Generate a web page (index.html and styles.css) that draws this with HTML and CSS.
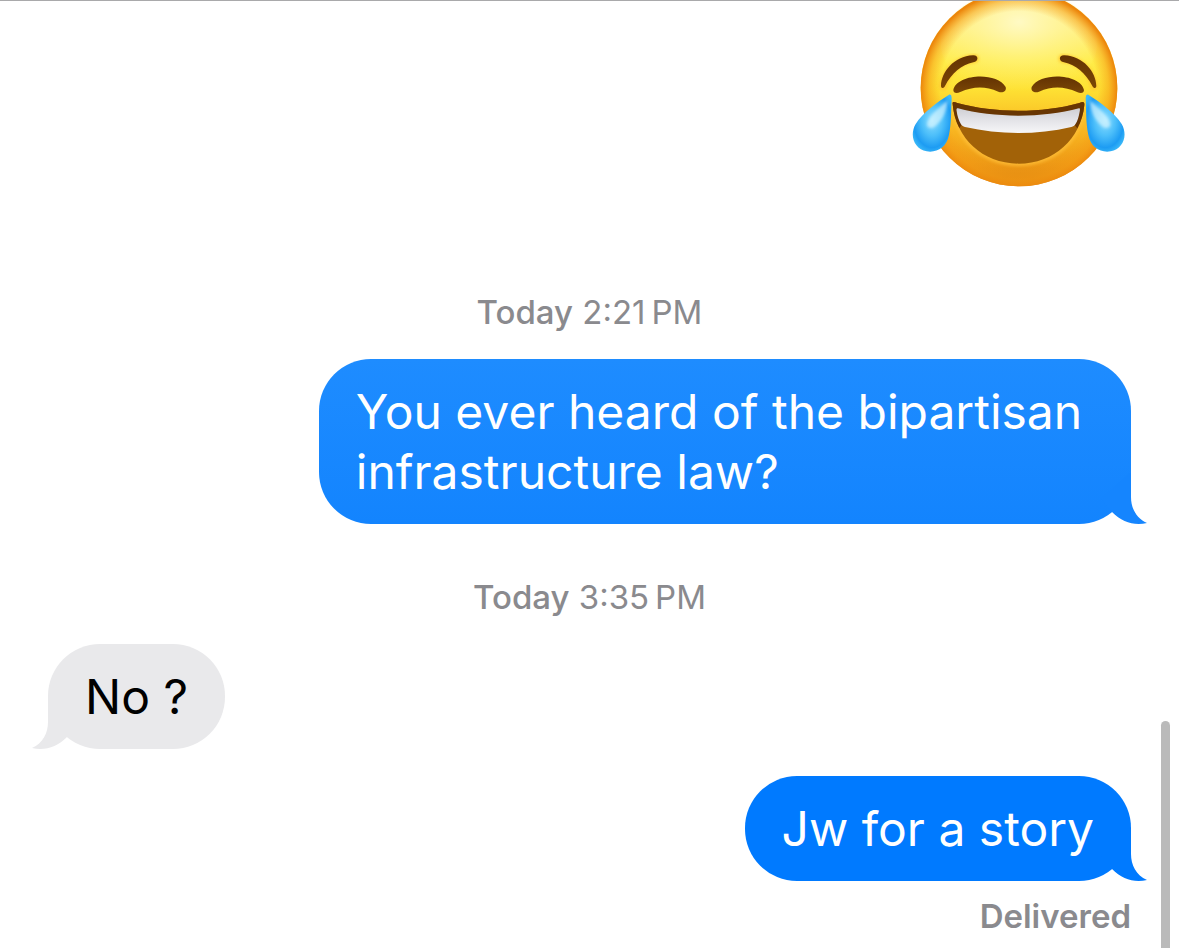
FILE: index.html
```html
<!DOCTYPE html>
<html lang="en">
<head>
<meta charset="utf-8">
<meta name="viewport" content="width=device-width, initial-scale=1">
<title>Messages</title>
<link rel="stylesheet" href="styles.css">
</head>
<body>
<main class="chat">
  <div class="row row-sent row-emoji">
    <svg class="emoji" viewBox="30 3 648 582" role="img" aria-label="Face with tears of joy">
      <defs>
        <linearGradient id="skin" x1="0" y1="0" x2="0" y2="1">
          <stop offset="0" stop-color="#fff08a"/>
          <stop offset=".2" stop-color="#fff07a"/>
          <stop offset=".36" stop-color="#ffed4a"/>
          <stop offset=".5" stop-color="#fee234"/>
          <stop offset=".7" stop-color="#f9b822"/>
          <stop offset=".88" stop-color="#ee9a16"/>
          <stop offset="1" stop-color="#dd8410"/>
        </linearGradient>
        <radialGradient id="rim" cx=".5" cy=".51" r=".5">
          <stop offset=".8" stop-color="#f59a13" stop-opacity="0"/>
          <stop offset=".91" stop-color="#f59a13" stop-opacity=".5"/>
          <stop offset="1" stop-color="#ec860c"/>
        </radialGradient>
        <radialGradient id="shine" cx=".5" cy=".3" r=".65">
          <stop offset="0" stop-color="#fffcd6" stop-opacity=".8"/>
          <stop offset=".5" stop-color="#fff8b0" stop-opacity=".4"/>
          <stop offset="1" stop-color="#fff3a0" stop-opacity="0"/>
        </radialGradient>
        <linearGradient id="brow" x1="0" y1="0" x2="0" y2="1">
          <stop offset="0" stop-color="#633203"/>
          <stop offset="1" stop-color="#7b4705"/>
        </linearGradient>
        <linearGradient id="teeth" x1="0" y1="0" x2="0" y2="1">
          <stop offset="0" stop-color="#cfcfd4"/>
          <stop offset=".5" stop-color="#e4e4e8"/>
          <stop offset="1" stop-color="#f6f6f8"/>
        </linearGradient>
        <radialGradient id="drop" cx=".5" cy=".45" r=".6">
          <stop offset="0" stop-color="#8adcff"/>
          <stop offset=".45" stop-color="#4dbffa"/>
          <stop offset=".8" stop-color="#1d9cf3"/>
          <stop offset="1" stop-color="#3cbaf8"/>
        </radialGradient>
        <filter id="soft" x="-20%" y="-20%" width="140%" height="140%"><feGaussianBlur stdDeviation="5"/></filter>
        <g id="features">
          <path d="M129 259C137 218 174 179 224 176" fill="none" stroke="#ffcd32" stroke-width="26" stroke-linecap="round" filter="url(#soft)"/>
          <path d="M123 258C124 216 162 169 219 166C237 165 236 185 220 187C184 194 155 220 135 258C130 267 123 265 123 258Z" fill="url(#brow)"/>
          <path d="M160 270C169 222 290 214 317 261C321 275 306 280 295 275C254 257 218 260 181 276C169 281 160 279 160 270Z" fill="url(#brow)"/>
          <path d="M147 284C153 283 155 288 155 296C153 330 155 365 147 405C140 443 110 459 80 454C43 447 27 407 47 372C68 338 112 306 147 284Z" fill="url(#drop)"/>
          <path d="M143 300C139 338 128 364 98 384C78 386 76 371 90 352C105 331 128 315 143 300Z" fill="#e1f9ff" opacity=".65" filter="url(#soft)"/>
        </g>
      </defs>
      <circle cx="357" cy="264" r="295" fill="url(#skin)"/>
      <ellipse cx="357" cy="130" rx="235" ry="160" fill="url(#shine)"/>
      <circle cx="357" cy="264" r="295" fill="url(#rim)"/>
      <path d="M156 307C285 347 430 347 554 307C560 411 475 498 357 498C236 498 151 410 156 307Z" fill="#ffc13a" opacity=".7" filter="url(#soft)"/>
      <path d="M158 313C156 304 162 304 172 309C285 340 427 340 538 309C549 304 554 305 553 315C543 417 462 491 356 491C248 491 168 416 158 313Z" fill="#a26208"/>
      <path d="M158 313C156 304 162 304 172 309C285 340 427 340 538 309C549 304 554 305 553 315C551 340 544 363 532 385L524 375L537 326C424 357 285 356 171 326L185 375L178 384C165 361 160 336 158 313Z" fill="#683603"/>
      <path d="M174 325C282 354 427 355 537 325C541 325 540 330 539 335C536 352 533 362 526 373C523 378 520 380 514 381C410 405 300 405 195 381C190 380 186 378 183 373C176 361 172 348 170 334C169 328 169 324 174 325Z" fill="url(#teeth)"/>
      <use href="#features"/>
      <use href="#features" transform="translate(712 0) scale(-1 1)"/>
    </svg>
  </div>

  <p class="stamp stamp-first"><strong>Today</strong> <time datetime="14:21">2:21&#8239;PM</time></p>

  <div class="row row-sent">
    <div class="bubble bubble-sent bubble-older">You ever heard of the bipartisan infrastructure law?
      <svg class="tail" viewBox="0 0 56 60" aria-hidden="true"><path d="M40 8V33C40 44 45 54 56 59C43 62 31 58 21 48L10 35Z"/></svg>
    </div>
  </div>

  <p class="stamp"><strong>Today</strong> <time datetime="15:35">3:35&#8239;PM</time></p>

  <div class="row row-received">
    <div class="bubble bubble-received">No ?
      <svg class="tail" viewBox="0 0 56 60" aria-hidden="true"><path d="M40 8V33C40 44 45 54 56 59C43 62 31 58 21 48L10 35Z"/></svg>
    </div>
  </div>

  <div class="row row-sent row-next">
    <div class="bubble bubble-sent">Jw for a story
      <svg class="tail" viewBox="0 0 56 60" aria-hidden="true"><path d="M40 8V33C40 44 45 54 56 59C43 62 31 58 21 48L10 35Z"/></svg>
    </div>
  </div>
  <p class="receipt">Delivered</p>
  <div class="scroll-thumb" aria-hidden="true"></div>
</main>
</body>
</html>
```
FILE: styles.css
```css
* {
  box-sizing: border-box;
}

body {
  margin: 0;
  background: #fff;
  font-family: Inter, "Liberation Sans", sans-serif;
}

.chat {
  position: relative;
  display: flex;
  flex-direction: column;
  min-height: 100vh;
  padding: 0 48px;
  border-top: 1px solid #a9a9ab;
  overflow: hidden;
}

.row {
  display: flex;
}

.row-sent {
  justify-content: flex-end;
}

.row-next {
  margin-top: 27px;
}

.emoji {
  display: block;
  width: 216px;
  height: 194px;
  margin-right: 5px;
}

.stamp {
  margin: 53px 0 27px;
  color: #8a8a8e;
  font-size: 33px;
  line-height: 40px;
  text-align: center;
}

.stamp-first {
  margin-top: 97px;
}

.stamp strong {
  font-weight: 500;
}

.bubble {
  position: relative;
  max-width: 75%;
  padding: 23px 37px 22px;
  border-radius: 52px;
  font-size: 48px;
  line-height: 60px;
}

.bubble-sent {
  background: #007aff;
  color: #fff;
  fill: #007aff;
}

.bubble-older {
  background: linear-gradient(#1e8cff, #1384fe);
  fill: #1585fe;
}

.bubble-received {
  background: #e9e9eb;
  color: #000;
  fill: #e9e9eb;
}

.tail {
  position: absolute;
  right: -16px;
  bottom: 0;
  width: 56px;
  height: 60px;
}

.bubble-received .tail {
  right: auto;
  left: -16px;
  transform: scaleX(-1);
}

.receipt {
  margin: 15px 0 0;
  color: #8a8a8e;
  font-size: 33px;
  font-weight: 600;
  line-height: 40px;
  text-align: right;
}

.scroll-thumb {
  position: absolute;
  top: 76%;
  right: 9px;
  bottom: 0;
  width: 9px;
  border-radius: 5px 5px 0 0;
  background: #bababa;
}
```
